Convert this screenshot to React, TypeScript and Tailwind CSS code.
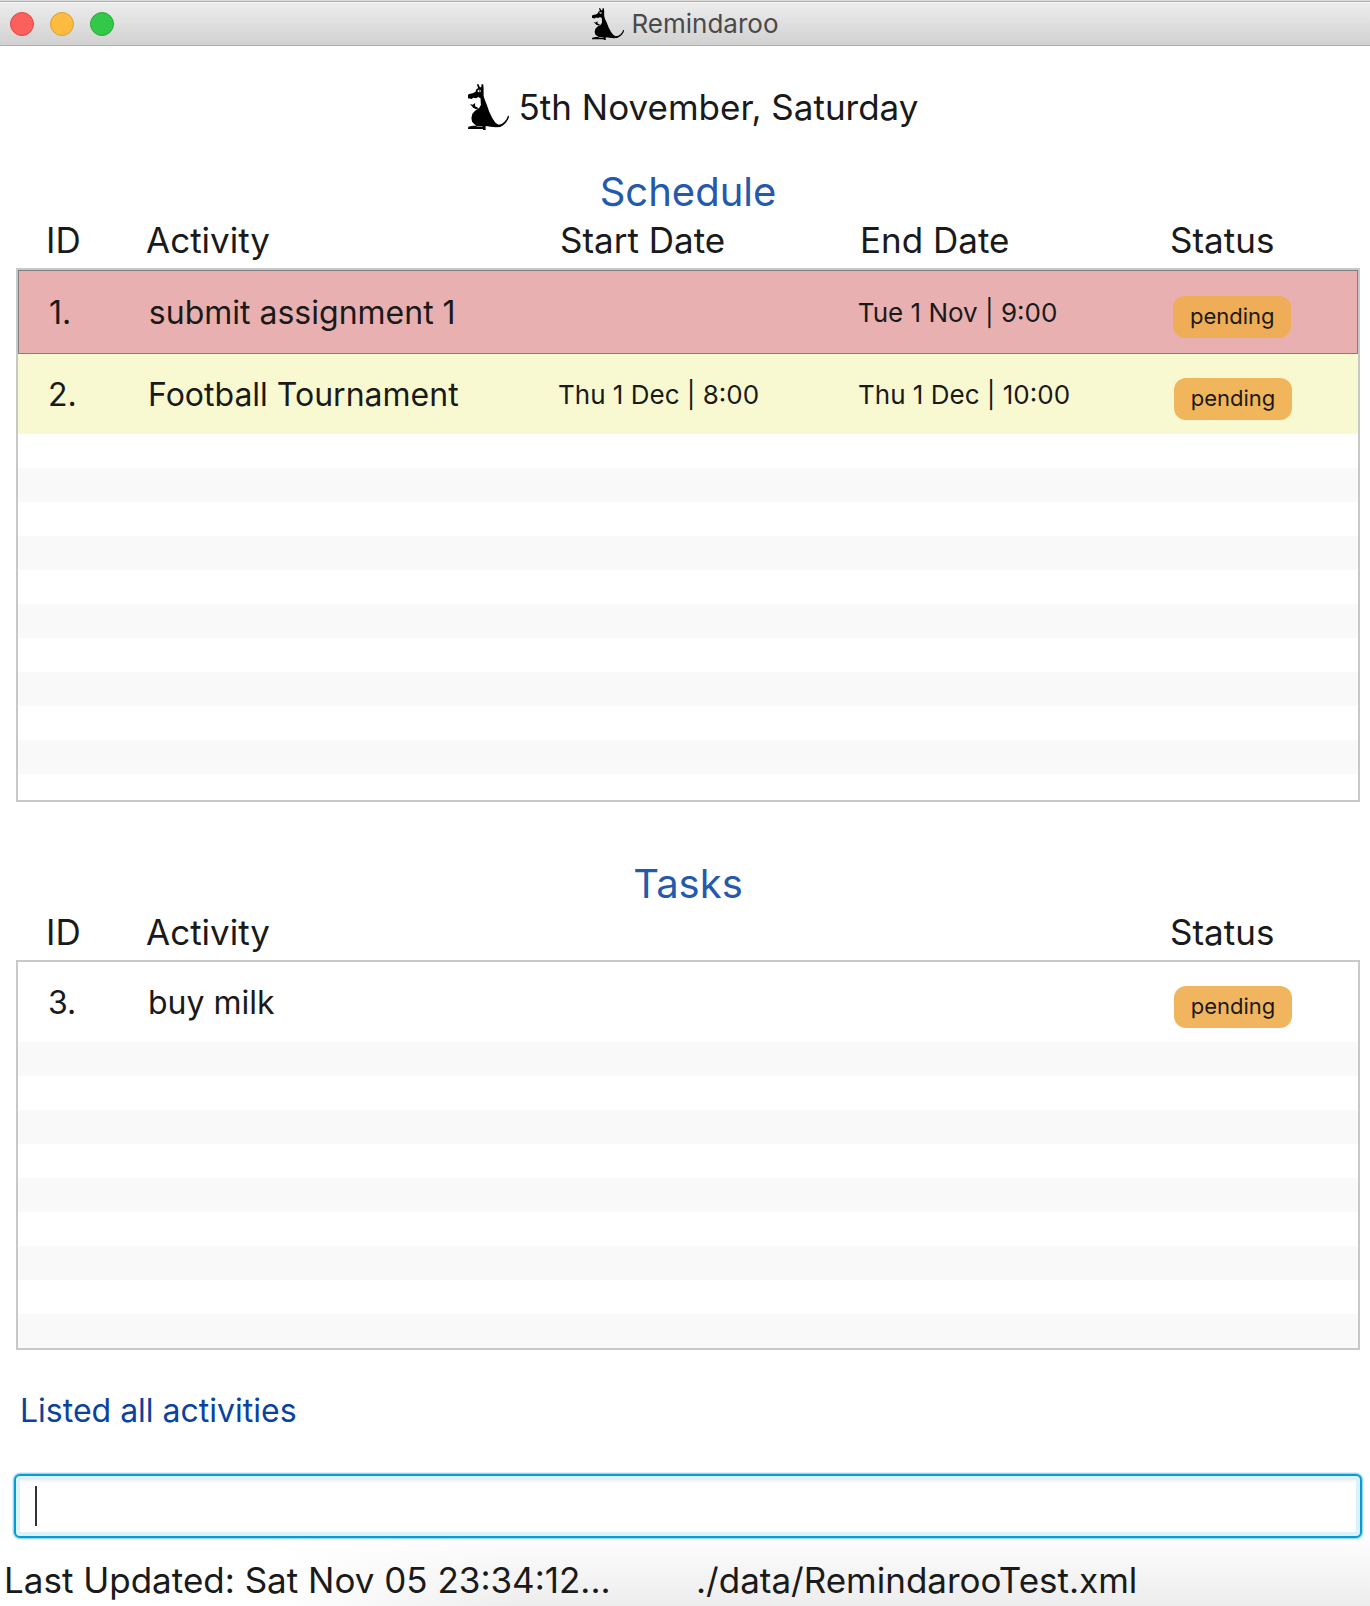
import React from "react";

type Activity = {
  id: string;
  name: string;
  start?: string;
  end?: string;
  status: string;
  rowClass: string;
};

const columns =
  "grid grid-cols-[100fr_412fr_300fr_316fr_212fr]";

const scheduled: Activity[] = [
  {
    id: "1.",
    name: "submit assignment 1",
    end: "Tue 1 Nov | 9:00",
    status: "pending",
    rowClass: "h-[84px] border border-[#808080] bg-[#e8b0b0]",
  },
  {
    id: "2.",
    name: "Football Tournament",
    start: "Thu 1 Dec | 8:00",
    end: "Thu 1 Dec | 10:00",
    status: "pending",
    rowClass: "h-20 bg-[#f9f9d1]",
  },
];

const tasks: Activity[] = [
  { id: "3.", name: "buy milk", status: "pending", rowClass: "h-20 bg-white" },
];

const WHITE = "block h-[34px] bg-white";
const GRAY = "block h-[34px] bg-[#f9f9f9]";

const scheduleFiller = [
  WHITE, GRAY, WHITE, GRAY, WHITE, GRAY, WHITE, GRAY, WHITE, GRAY,
  "block h-[26px] bg-white",
];
const taskFiller = [GRAY, WHITE, GRAY, WHITE, GRAY, WHITE, GRAY, WHITE, GRAY];

function Kangaroo({ className }: { className: string }) {
  return (
    <svg
      viewBox="36 27 121 138"
      preserveAspectRatio="none"
      className={className}
      aria-hidden="true"
    >
      <path d="M62 28 L67 28 L71 37 L75 37 L76 28 L81 28 L82 40 L82 62 L85 73 L92 91 L99 111 L108 130 L117 143 L126 149 L135 147 L143 141 L150 132 L154 122 L157 122 L156 130 L149 142 L140 151 L131 156 L118 157 L103 155 L88 153 L88 165 L81 165 L80 162 L36 162 L37 155 L50 152 L61 152 L54 147 L48 140 L46 129 L49 116 L57 107 L69 99 L74 90 L73 70 L66 66 L60 70 L51 68 L47 72 L36 70 L36 60 L39 57 L50 55 L58 50 L61 42 L66 40 Z" />
      <path d="M42 87 L50 89 L57 84 L57 94 L68 100 L60 103 L51 98 L49 95 Z" />
      <path d="M62 153.500 H79 V155 H60 Z" fill="#fff" />
      <ellipse cx="69" cy="48" rx="5" ry="4" fill="#fff" />
      <circle cx="70" cy="48" r="2.500" />
    </svg>
  );
}

function ActivityTable({
  title,
  rows,
  filler,
  dated,
}: {
  title: string;
  rows: Activity[];
  filler: string[];
  dated: boolean;
}) {
  return (
    <table className="block">
      <caption className="block text-center text-[40px] leading-[50px] text-[#2459ab]">
        {title}
      </caption>
      <thead className="block px-0.5">
        <tr className={`${columns} h-[51px] text-left text-[35px] leading-[46px]`}>
          <th scope="col" className="pl-7 font-normal">ID</th>
          <th scope="col" className="pl-7 font-normal">Activity</th>
          <th scope="col" className="pl-[30px] font-normal">{dated && "Start Date"}</th>
          <th scope="col" className="pl-[30px] font-normal">{dated && "End Date"}</th>
          <th scope="col" className="pl-6 font-normal">Status</th>
        </tr>
      </thead>
      <tbody className="block border-2 border-[#c8c8c8]">
        {rows.map((row) => (
          <tr
            key={row.id}
            className={`${columns} items-center whitespace-nowrap pt-0.5 text-[32px] leading-10 ${row.rowClass}`}
          >
            <td className="pl-[30px]">{row.id}</td>
            <td className="pl-[30px]">{row.name}</td>
            <td className="pl-7 text-[26px]">{row.start}</td>
            <td className="pl-7 text-[26px]">{row.end}</td>
            <td className="flex pl-7 pt-2">
              <span className="flex h-[42px] w-[118px] items-center justify-center rounded-xl bg-[#f0ad4e]/90 pb-0.5 text-[22px]">
                {row.status}
              </span>
            </td>
          </tr>
        ))}
        {filler.map((rowClass, i) => (
          <tr key={i} aria-hidden="true" className={rowClass} />
        ))}
      </tbody>
    </table>
  );
}

export default function App() {
  return (
    <div className="flex min-h-screen flex-col bg-white font-['Inter',sans-serif] text-[#1a1a1a]">
      <header className="relative flex h-[46px] items-center justify-center border-b border-t border-b-[#acacac] border-t-[#dcdcdc] bg-linear-to-b from-[#eeeeee] to-[#d1d1d1] pt-0.5 shadow-[inset_0_1px_0_#b0b0b0,inset_0_2px_0_#f7f7f7]">
        <div className="absolute left-2.5 flex gap-4">
          <button aria-label="Close" className="size-6 rounded-full border border-[#df4744] bg-[#fc605c]" />
          <button aria-label="Minimize" className="size-6 rounded-full border border-[#de9f34] bg-[#fdbc40]" />
          <button aria-label="Zoom" className="size-6 rounded-full border border-[#27aa35] bg-[#34c84a]" />
        </div>
        <Kangaroo className="mr-2 size-8" />
        <span className="text-[26px] leading-8 text-[#4a4a4a]">Remindaroo</span>
      </header>

      <main className="flex flex-col px-4 pr-2.5">
        <h1 className="mt-9 flex h-[50px] items-center justify-center pl-2.5 text-[35px] leading-[50px]">
          <Kangaroo className="mr-2.5 h-[46px] w-[41px]" />
          5th November, Saturday
        </h1>

        <section className="mt-[35px]">
          <ActivityTable title="Schedule" rows={scheduled} filler={scheduleFiller} dated />
        </section>
        <section className="mt-[57px]">
          <ActivityTable title="Tasks" rows={tasks} filler={taskFiller} dated={false} />
        </section>

        <p className="mt-10 pl-1 text-[32px] leading-[42px] text-[#0a439e]">
          Listed all activities
        </p>
      </main>

      <div className="relative mx-2 ml-3.5 mt-[42px]">
        <input
          type="text"
          aria-label="Command"
          className="block h-16 w-full rounded-md border-2 border-[#039ed3] bg-white px-5 text-[32px] caret-transparent shadow-[0_0_0_1px_#9bd8ed,0_0_0_2px_#dcf1f9,inset_0_0_0_4px_#ddf1f8,inset_0_6px_1px_0_#f6f6f6] outline-none"
        />
        <span aria-hidden="true" className="absolute left-[21px] top-3 h-10 w-0.5 bg-[#333]" />
      </div>

      <footer className="flex grow items-start whitespace-nowrap bg-[linear-gradient(to_right,white_20%,transparent_38%),linear-gradient(to_bottom,#fdfdfd,#ededed)] pl-1 pt-5 text-[35px] leading-[44px]">
        <span className="w-[692px]">Last Updated: Sat Nov 05 23:34:12...</span>
        <span>./data/RemindarooTest.xml</span>
      </footer>
    </div>
  );
}
